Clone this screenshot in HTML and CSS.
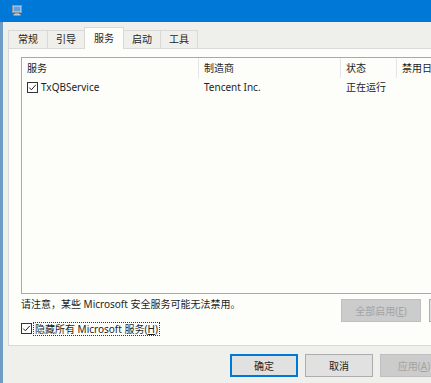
FILE: index.html
```html
<!DOCTYPE html>
<html lang="zh-CN">
<head>
<meta charset="utf-8">
<title>系统配置</title>
<link rel="stylesheet" href="styles.css">
</head>
<body>
<div class="window">
  <div class="titlebar">
    <svg class="appicon" width="10" height="11" viewBox="0 0 10 11">
      <rect x="0.5" y="0.5" width="9" height="7" fill="#d8dde4" stroke="#8a96a6"/>
      <rect x="1.5" y="1.5" width="7" height="5" fill="#5fa0e0"/>
      <rect x="3" y="8" width="4" height="1" fill="#9aa4b0"/>
      <rect x="1.5" y="9" width="7" height="1.5" fill="#c4cad2"/>
    </svg>
  </div>
  <div class="client">
    <div class="tabs">
      <div class="tab">常规</div>
      <div class="tab">引导</div>
      <div class="tab active">服务</div>
      <div class="tab">启动</div>
      <div class="tab">工具</div>
    </div>
    <div class="panel">
      <div class="listview">
        <div class="lv-header">
          <div class="col c1">服务</div>
          <div class="col c2">制造商</div>
          <div class="col c3">状态</div>
          <div class="col c4">禁用日期</div>
        </div>
        <div class="lv-row">
          <div class="col c1">
            <svg class="check" width="11" height="11" viewBox="0 0 11 11">
              <rect x="0.5" y="0.5" width="10" height="10" fill="#fff" stroke="#333"/>
              <path d="M2.3 5.6 L4.4 7.8 L8.8 2.8" fill="none" stroke="#222" stroke-width="1"/>
            </svg>
            <span>TxQBService</span>
          </div>
          <div class="col c2">Tencent Inc.</div>
          <div class="col c3">正在运行</div>
          <div class="col c4"></div>
        </div>
      </div>
      <div class="note-row">
        <span class="note">请注意，某些 Microsoft 安全服务可能无法禁用。</span>
        <div class="note-btns">
          <button class="btn disabled">全部启用(<u>E</u>)</button>
          <button class="btn">全部禁用(<u>D</u>)</button>
        </div>
      </div>
      <div class="hide-row">
        <svg class="check" width="11" height="11" viewBox="0 0 11 11">
          <rect x="0.5" y="0.5" width="10" height="10" fill="#fff" stroke="#333"/>
          <path d="M2.3 5.6 L4.4 7.8 L8.8 2.8" fill="none" stroke="#222" stroke-width="1"/>
        </svg>
        <span class="focus-label">隐藏所有 Microsoft 服务(<u>H</u>)</span>
      </div>
    </div>
    <div class="footer">
      <button class="btn default">确定</button>
      <button class="btn">取消</button>
      <button class="btn disabled">应用(<u>A</u>)</button>
    </div>
  </div>
</div>
</body>
</html>
```
FILE: styles.css
```css
* { box-sizing: border-box; }
html, body {
  margin: 0;
  padding: 0;
  width: 431px;
  height: 383px;
  overflow: hidden;
  background: #efefeb;
}
body {
  font-family: "Noto Sans", "Noto Sans CJK SC", sans-serif;
  font-size: 10px;
  color: #1e1e1e;
}
.window {
  width: 600px;
  height: 383px;
  display: flex;
  flex-direction: column;
}
.titlebar {
  height: 22px;
  background: #0078d7;
  flex: none;
  padding: 5px 0 0 12px;
}
.appicon { display: block; }
.client {
  flex: 1;
  background: #efefeb;
  border-left: 3px solid #6f9cc4;
  padding: 5px 0 0 5px;
}
.tabs {
  display: flex;
  height: 21px;
  align-items: flex-end;
  position: relative;
  z-index: 1;
}
.tab {
  height: 18px;
  line-height: 17px;
  padding: 0;
  text-align: center;
  width: 37px;
  border: 1px solid #d9d9d9;
  border-bottom: none;
  border-left: none;
  background: #efefeb;
  margin-bottom: 0;
}
.tab:first-child { width: 40px; border-left: 1px solid #d9d9d9; }
.tab.active {
  width: 40px;
  height: 22px;
  margin-bottom: -1px;
  background: #fdfdfa;
  border-left: 1px solid #d9d9d9;
  margin-left: -1px;
  line-height: 20px;
}
.panel {
  width: 520px;
  height: 298px;
  background: #fdfdfa;
  border: 1px solid #d9d9d9;
  padding: 8px 0 0 12px;
}
.listview {
  height: 237px;
  width: 500px;
  border: 1px solid #a9a9a9;
  background: #fdfdfa;
}
.lv-header, .lv-row {
  display: flex;
}
.lv-header { height: 20px; }
.lv-header .col {
  line-height: 20px;
  border-right: 1px solid #e5e5e5;
  color: #222;
}
.lv-row { height: 19px; }
.lv-row .col { line-height: 19px; }
.col { padding-left: 5px; white-space: nowrap; overflow: hidden; }
.c1 { width: 177px; display: flex; align-items: center; }
.c2 { width: 142px; }
.c3 { width: 56px; }
.c4 { width: 100px; }
.lv-row .c1 { padding-left: 5px; }
.lv-row .c1 .check { margin-right: 3px; flex: none; }
.note-row {
  display: flex;
  align-items: flex-start;
  margin-top: 5px;
  height: 23px;
}
.note {
  width: 320px;
  line-height: 11px;
  padding-top: 0;
}
.note-btns {
  display: flex;
  gap: 8px;
}
.btn {
  font-family: inherit;
  font-size: 10px;
  height: 23px;
  width: 68px;
  padding: 0;
  margin: 0;
  background: #e1e1e1;
  border: 1px solid #adadad;
  color: #1e1e1e;
}
.note-btns .btn { width: 80px; }
.btn.disabled {
  background: #cccccc;
  border-color: #bfbfbf;
  color: #a3a3a3;
}
.btn.default {
  border: 2px solid #0078d7;
}
.hide-row {
  display: flex;
  align-items: center;
  height: 13px;
  padding-left: 0;
}
.hide-row .check { flex: none; margin-right: 1px; }
.focus-label {
  border: 1px dotted #333;
  line-height: 12px;
  padding: 0 1px;
  margin-left: 0;
}
.footer {
  display: flex;
  gap: 7px;
  margin-top: 8px;
  padding-left: 222px;
}
.footer .btn { height: 23px; }
```
